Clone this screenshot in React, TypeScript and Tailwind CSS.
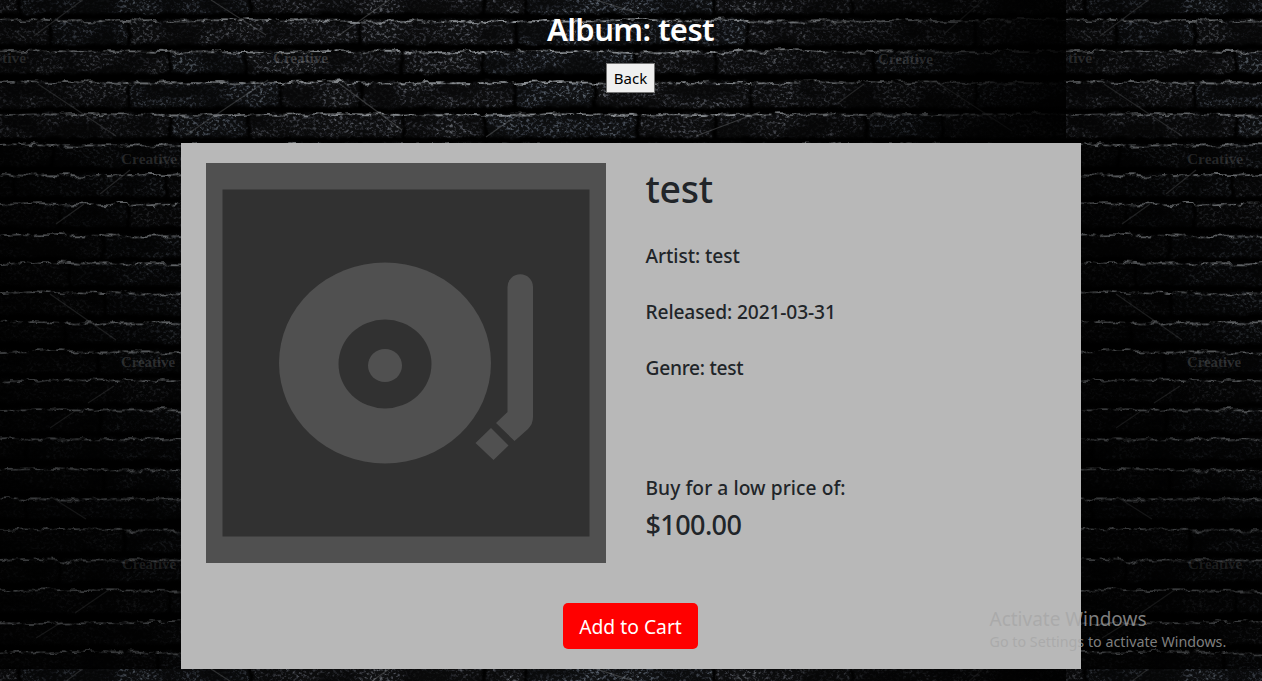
const TILE_W = 1066;
const TILE_H = 669;

type Row = { y: number; h: number; joints: number[] };

const rows: Row[] = [
  { y: -8, h: 21, joints: [20, 250, 484, 526, 714, 852, 1087] },
  { y: 20, h: 24, joints: [50, 129, 360, 516, 748, 975] },
  { y: 51, h: 22, joints: [170, 246, 402, 483, 636, 716, 874] },
  { y: 82, h: 25, joints: [128, 281, 361, 515, 595, 751, 976] },
  { y: 114, h: 23, joints: [170, 249, 404, 485, 638, 716, 866, 942] },
  { y: 144, h: 22, joints: [53, 360, 520, 750, 980] },
  { y: 174, h: 22, joints: [14, 166, 400, 640, 870] },
  { y: 203, h: 23, joints: [60, 129, 360, 600, 860] },
  { y: 235, h: 22, joints: [104, 400, 640, 870] },
  { y: 263, h: 22, joints: [70, 300, 600, 860] },
  { y: 292, h: 22, joints: [104, 400, 700] },
  { y: 322, h: 20, joints: [65, 300, 600, 860] },
  { y: 351, h: 21, joints: [98, 400, 700] },
  { y: 380, h: 22, joints: [300, 600, 860] },
  { y: 409, h: 22, joints: [100, 320, 700] },
  { y: 438, h: 21, joints: [27, 300, 600, 860] },
  { y: 469, h: 21, joints: [104, 320, 700] },
  { y: 498, h: 20, joints: [27, 300, 600] },
  { y: 529, h: 22, joints: [124, 320, 700] },
  { y: 559, h: 22, joints: [60, 300, 600] },
  { y: 590, h: 22, joints: [170, 400, 700] },
  { y: 622, h: 22, joints: [300, 600] },
  { y: 652, h: 17, joints: [158, 400, 700] },
];

const scratches: [number, number, number, number][] = [
  [85, -2, 34, 36], [211, 0, 266, 35], [392, -2, 338, 36], [38, 84, 116, 136],
  [268, 80, 186, 135], [340, 84, 402, 130], [522, 112, 486, 137], [990, -6, 944, 34],
  [838, 103, 864, 84], [940, 84, 1012, 131], [130, 170, 100, 194], [84, 204, 56, 224],
  [50, 294, 116, 340], [114, 386, 88, 403], [78, 409, 50, 428], [51, 497, 86, 519],
  [110, 589, 75, 613], [62, 622, 36, 638], [760, 112, 696, 136], [590, -2, 640, 14],
];

const marks: { x: number; y: number; w: number; label: string; dim: number }[] = [
  { x: 2, y: 63, w: 24, label: "tive", dim: 0.22 },
  { x: 273, y: 63, w: 55, label: "Creative", dim: 0.32 },
  { x: 878, y: 64, w: 55, label: "Creative", dim: 0.24 },
  { x: 1068, y: 63, w: 24, label: "tive", dim: 0.24 },
  { x: 121, y: 164, w: 56, label: "Creative", dim: 0.22 },
  { x: 1187, y: 164, w: 56, label: "Creative", dim: 0.22 },
  { x: 121, y: 367, w: 54, label: "Creative", dim: 0.26 },
  { x: 1187, y: 367, w: 54, label: "Creative", dim: 0.26 },
  { x: 122, y: 569, w: 54, label: "Creative", dim: 0.18 },
  { x: 1188, y: 569, w: 54, label: "Creative", dim: 0.18 },
];

function BrickTile() {
  return (
    <g>
      <g filter="url(#brick-surface)">
        <rect x="-20" y="-20" width="1106" height="710" fill="#000" />
        {rows.map((row) => {
          const edges = [-10, ...row.joints, TILE_W + 10];
          return edges.slice(0, -1).map((x, i) => {
            if (x >= TILE_W) return null;
            return (
              <rect key={`${row.y}-${i}`} x={x + 2} y={row.y} width={Math.min(edges[i + 1], TILE_W + 10) - x - 4} height={row.h} rx="2" fill={i % 3 === 1 ? "#535b62" : "#515458"} />
            );
          });
        })}
      </g>
      <rect y="140" width="300" height={TILE_H - 140} fill="url(#left-shade)" />
      <g filter="url(#ridge)" fill="none">
        {rows.map((row) => {
          const edges = [-10, ...row.joints, TILE_W + 10];
          return edges.slice(0, -1).map((x, i) => (
            <path key={`${row.y}-${i}`} d={`M${x} ${row.y + 1.5}Q${(x + edges[i + 1]) / 2} ${row.y - 1 + (i % 2) * 2} ${edges[i + 1]} ${row.y + 1}`} stroke="#8d9195" strokeWidth="1.9" />
          ));
        })}
      </g>
      <g stroke="#85888b" strokeOpacity=".38" strokeWidth="1.2">
        {scratches.map(([x1, y1, x2, y2]) => (
          <line key={`${x1}-${y1}`} x1={x1} y1={y1} x2={x2} y2={y2} />
        ))}
      </g>
      <rect width={TILE_W} height={TILE_H} fill="url(#falloff)" />
      <rect width={TILE_W} height={TILE_H} fill="url(#right-edge)" />
    </g>
  );
}

function BrickWall() {
  return (
    <svg className="absolute inset-0 -z-10 h-[681px] w-[1262px]" viewBox="0 0 1262 681" aria-hidden="true">
      <defs>
        <filter id="brick-surface" filterUnits="userSpaceOnUse" x="-10" y="-10" width="1086" height="690" colorInterpolationFilters="sRGB">
          <feTurbulence type="fractalNoise" baseFrequency="0.05 0.08" numOctaves="2" seed="8" result="warp" />
          <feDisplacementMap in="SourceGraphic" in2="warp" scale="6" xChannelSelector="R" yChannelSelector="G" result="bricks" />
          <feGaussianBlur in="bricks" stdDeviation="1.2" result="soft" />
          <feTurbulence type="fractalNoise" baseFrequency="0.3 0.36" numOctaves="4" seed="21" />
          <feColorMatrix type="matrix" values="3.2 0 0 0 -1.58  3.2 0 0 0 -1.58  3.2 0 0 0 -1.56  0 0 0 0 1" result="fine" />
          <feTurbulence type="fractalNoise" baseFrequency="0.025 0.05" numOctaves="2" seed="4" />
          <feColorMatrix type="matrix" values="3.4 0 0 0 -1.15  3.4 0 0 0 -1.15  3.4 0 0 0 -1.12  0 0 0 0 1" result="patches" />
          <feComposite in="fine" in2="patches" operator="arithmetic" k1="0.8" k2="0.15" k3="0.08" k4="0.02" result="grain" />
          <feComposite in="soft" in2="grain" operator="arithmetic" k1="1.1" k2="0.09" result="rough" />
          <feColorMatrix in="rough" type="matrix" values="1 0 0 0 0  0 1 0 0 0  0 0 1 0 0  0 0 0 0 1" />
          <feGaussianBlur stdDeviation=".5" />
        </filter>
        <filter id="ridge" filterUnits="userSpaceOnUse" x="-10" y="-10" width="1086" height="690" colorInterpolationFilters="sRGB">
          <feTurbulence type="fractalNoise" baseFrequency="0.07" numOctaves="4" seed="5" result="warp" />
          <feDisplacementMap in="SourceGraphic" in2="warp" scale="8" xChannelSelector="R" yChannelSelector="G" result="line" />
          <feTurbulence type="fractalNoise" baseFrequency="0.14 0.2" numOctaves="3" seed="33" />
          <feColorMatrix type="matrix" values="0 0 0 0 1  0 0 0 0 1  0 0 0 0 1  3 0 0 0 -.8" result="breaks" />
          <feComposite in="line" in2="breaks" operator="in" />
          <feGaussianBlur stdDeviation=".55" />
        </filter>
        <radialGradient id="falloff" gradientUnits="userSpaceOnUse" cx="0" cy="0" r="1" gradientTransform="translate(560 40) scale(650 600)">
          <stop offset="0" stopColor="#000" stopOpacity="0" />
          <stop offset=".4" stopColor="#000" stopOpacity=".1" />
          <stop offset=".8" stopColor="#000" stopOpacity=".4" />
          <stop offset="1" stopColor="#000" stopOpacity=".6" />
        </radialGradient>
        <linearGradient id="left-shade">
          <stop offset="0" stopColor="#000" stopOpacity=".75" />
          <stop offset=".3" stopColor="#000" stopOpacity=".65" />
          <stop offset="1" stopColor="#000" stopOpacity="0" />
        </linearGradient>
        <linearGradient id="right-edge">
          <stop offset=".68" stopColor="#000" stopOpacity="0" />
          <stop offset=".86" stopColor="#000" stopOpacity=".45" />
          <stop offset=".99" stopColor="#000" stopOpacity=".88" />
        </linearGradient>
        <clipPath id="tile-clip">
          <rect width={TILE_W} height={TILE_H} />
        </clipPath>
      </defs>
      <rect width="1262" height="681" fill="#000" />
      {[0, TILE_H].map((y) =>
        [0, TILE_W].map((x) => (
          <g key={`${x}-${y}`} transform={`translate(${x} ${y})`}>
            <g clipPath="url(#tile-clip)">
              <BrickTile />
            </g>
          </g>
        )),
      )}
      <g fill="#9a9da0" fontFamily="Liberation Serif, serif" fontSize="15" fontWeight="700">
        {marks.map((m) => (
          <text key={`${m.x}-${m.y}`} x={m.x} y={m.y} fillOpacity={m.dim} textLength={m.w} lengthAdjust="spacingAndGlyphs">{m.label}</text>
        ))}
      </g>
    </svg>
  );
}

function Turntable() {
  return (
    <svg className="size-[400px] shrink-0" viewBox="0 0 400 400" role="img" aria-label="Album cover">
      <rect width="400" height="400" fill="#505050" />
      <rect x="16.5" y="26.5" width="367" height="347" fill="#313131" />
      <ellipse cx="179" cy="200" rx="106" ry="100.5" fill="#505050" />
      <ellipse cx="179" cy="201" rx="46.5" ry="44.5" fill="#313131" />
      <ellipse cx="179" cy="202.5" rx="17" ry="16.5" fill="#505050" />
      <path d="M301.5 124A12.7 12.7 0 0 1 327 124V254Q327 261 322 266L308.5 278L290 260L301.5 249Z" fill="#505050" />
      <path d="M285 265L302.5 282.5L287.5 297L269.5 280Z" fill="#505050" />
    </svg>
  );
}

export default function App() {
  return (
    <div className="relative isolate h-[681px] w-[1262px] overflow-hidden font-['Noto_Sans',sans-serif] text-[#212529]">
      <BrickWall />
      <header className="flex h-[143px] flex-col items-center pt-[10px] pr-px">
        <h1 className="text-[31px] leading-[39px] font-semibold tracking-[-0.6px] text-white">Album: test</h1>
        <button className="mt-[14px] h-[30px] w-[49px] border border-[#767676] bg-[#efefef] text-[15px] leading-none text-black">Back</button>
      </header>
      <main className="mx-auto flex h-[526px] w-[900px] flex-col items-center bg-[#b8b8b8] pt-5">
        <section className="flex w-full gap-10 pl-[25px]">
          <Turntable />
          <div className="-ml-[0.5px] flex flex-col text-[19.2px] leading-6 font-medium">
            <h2 className="mt-[2px] text-[37.5px] leading-[48px] tracking-[-0.3px]">test</h2>
            <p className="mt-[31px] tracking-[-0.08px]">Artist: test</p>
            <p className="mt-8 tracking-[-0.13px]">Released: 2021-03-31</p>
            <p className="mt-8 tracking-[-0.28px]">Genre: test</p>
            <p className="mt-24 tracking-[0.06px]">Buy for a low price of:</p>
            <p className="mt-2 text-[27px] leading-[34px] tracking-[-0.6px]">$100.00</p>
          </div>
        </section>
        <button className="mt-10 mr-px h-[46px] w-[135px] rounded-[5px] bg-[#ff0000] pt-[2px] text-[19.3px] leading-none text-white">Add to Cart</button>
      </main>
      <aside className="absolute top-[606px] left-[989.5px] whitespace-nowrap text-[rgba(166,166,166,0.77)]">
        <p className="text-[19px] leading-[26px]">Activate Windows</p>
        <p className="text-[14.3px] leading-5">Go to Settings to activate Windows.</p>
      </aside>
    </div>
  );
}
